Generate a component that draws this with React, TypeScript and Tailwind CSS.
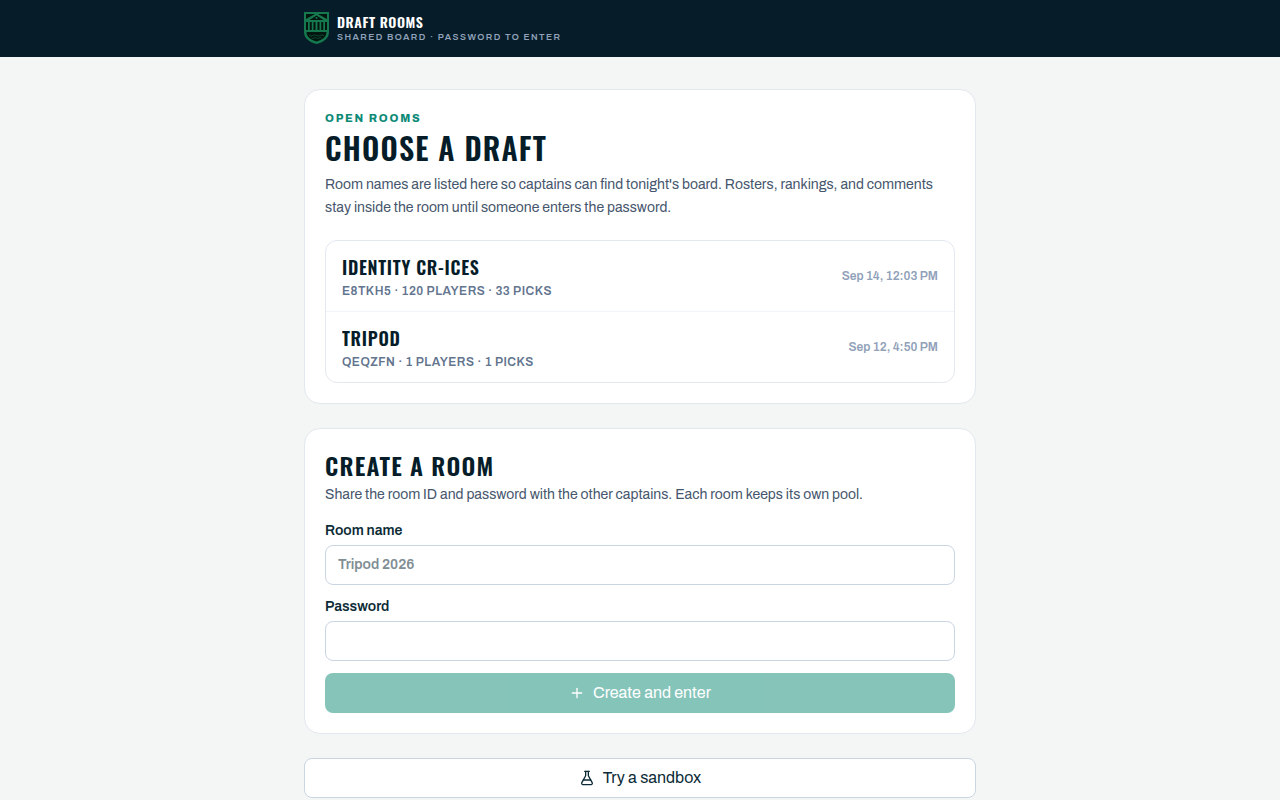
import { useState } from "react";
import { FlaskConical, Plus } from "lucide-react";

const rooms = [
  { id: "E8TKH5", name: "Identity CR-ICES", players: 120, picks: 33, updated: "Sep 14, 12:03 PM" },
  { id: "QEQZFN", name: "Tripod", players: 1, picks: 1, updated: "Sep 12, 4:50 PM" },
];

function Crest() {
  return (
    <svg viewBox="0 0 50 64" className="h-8 w-auto shrink-0" aria-hidden="true">
      <path d="M0 0h50v40c0 12-10 20-25 24C10 60 0 52 0 40Z" fill="#16784f" />
      <g fill="#03150f">
        {/* sky either side of the gable, then the gable itself */}
        <path d="M4 4h18L4 14ZM46 4H28l18 10Z" />
        <path d="M11 16 25 7l14 9Z" />
        {/* gaps between the columns */}
        <path d="M4 20h4v16H4ZM11.500 20h4v16h-4ZM19 20h4v16h-4ZM27 20h4v16h-4ZM34.500 20h4v16h-4ZM42 20h4v16h-4Z" />
        <path d="M5 40h40c0 10-8 15-20 19C13 55 5 50 5 40Z" />
      </g>
      <circle cx="25" cy="12" r="2" fill="#16784f" />
      <path
        d="M10 47q4 2 7.500 0t7.500 0 7.500 0 7.500 0M15 52q2.500 2 5 0t5 0 5 0 5 0"
        fill="none"
        stroke="#16784f"
        strokeWidth="1"
      />
    </svg>
  );
}

function RoomRow({ room }: { room: (typeof rooms)[number] }) {
  return (
    <li>
      <a href={`#${room.id}`} className="flex items-center justify-between gap-4 px-4 py-3 hover:bg-slate-50">
        <div className="flex min-w-0 flex-col gap-0.5">
          <span className="truncate font-[Oswald,sans-serif] text-lg font-semibold uppercase tracking-[0.04em] text-[#061d29]">
            {room.name}
          </span>
          <span className="text-xs font-semibold uppercase tracking-[0.04em] text-slate-500">
            {room.id} · {room.players} players · {room.picks} picks
          </span>
        </div>
        <span className="shrink-0 text-xs font-semibold text-slate-400">{room.updated}</span>
      </a>
    </li>
  );
}

const inputClass =
  "h-10 w-full rounded-lg border border-slate-300 bg-white px-3 text-sm font-semibold text-[#0c2b36] outline-none placeholder:text-[#808d93] focus:border-[#0d8a76]";

export default function App() {
  const [name, setName] = useState("");
  const [password, setPassword] = useState("");

  return (
    <div className="min-h-screen bg-[#f3f6f5] font-[Archivo,'Liberation_Sans',sans-serif] text-[#0c2b36]">
      <header className="border-b border-[#061d29]/80 bg-[#061d29]">
        <div className="mx-auto flex h-14 max-w-[704px] items-center gap-2 px-4">
          <Crest />
          <div className="flex flex-col">
            <span className="font-[Oswald,sans-serif] text-sm leading-[18px] font-semibold uppercase tracking-[0.04em] text-white">
              Draft Rooms
            </span>
            <span className="text-[9px] leading-3 font-semibold uppercase tracking-[0.16em] text-slate-400">
              Shared board · Password to enter
            </span>
          </div>
        </div>
      </header>

      <main className="mx-auto flex max-w-[704px] flex-col gap-6 px-4 py-8">
        <section className="rounded-2xl border border-slate-200 bg-white p-5">
          <p className="text-[11px] leading-4 font-extrabold uppercase tracking-[0.16em] text-[#0d8a76]">Open rooms</p>
          <h1 className="mt-1 font-[Oswald,sans-serif] text-3xl font-semibold uppercase tracking-[0.04em] text-[#061d29]">
            Choose a draft
          </h1>
          <p className="mt-2 text-sm leading-relaxed text-slate-600">
            Room names are listed here so captains can find tonight's board. Rosters, rankings, and comments stay inside
            the room until someone enters the password.
          </p>
          <ul className="mt-5 divide-y divide-slate-100 overflow-hidden rounded-xl border border-slate-200">
            {rooms.map((room) => (
              <RoomRow key={room.id} room={room} />
            ))}
          </ul>
        </section>

        <section className="rounded-2xl border border-slate-200 bg-white p-5">
          <h2 className="font-[Oswald,sans-serif] text-2xl font-semibold uppercase tracking-wider text-[#061d29]">
            Create a room
          </h2>
          <p className="mt-1 text-sm text-slate-600">
            Share the room ID and password with the other captains. Each room keeps its own pool.
          </p>
          <form className="mt-4 flex flex-col gap-3" onSubmit={(e) => e.preventDefault()}>
            <div className="flex flex-col gap-1">
              <label htmlFor="room-name" className="text-sm font-semibold">
                Room name
              </label>
              <input
                id="room-name"
                className={inputClass}
                placeholder="Tripod 2026"
                value={name}
                onChange={(e) => setName(e.target.value)}
              />
            </div>
            <div className="flex flex-col gap-1">
              <label htmlFor="room-password" className="text-sm font-semibold">
                Password
              </label>
              <input
                id="room-password"
                type="password"
                className={inputClass}
                value={password}
                onChange={(e) => setPassword(e.target.value)}
              />
            </div>
            <button
              type="submit"
              disabled={!name || !password}
              className="flex h-10 items-center justify-center gap-2 rounded-lg bg-[#0d8a76] px-4 text-white disabled:opacity-50"
            >
              <Plus className="size-4" />
              Create and enter
            </button>
          </form>
        </section>

        <button
          type="button"
          className="flex h-10 items-center justify-center gap-2 rounded-lg border border-slate-300 bg-white px-4"
        >
          <FlaskConical className="size-4" />
          Try a sandbox
        </button>
      </main>
    </div>
  );
}
